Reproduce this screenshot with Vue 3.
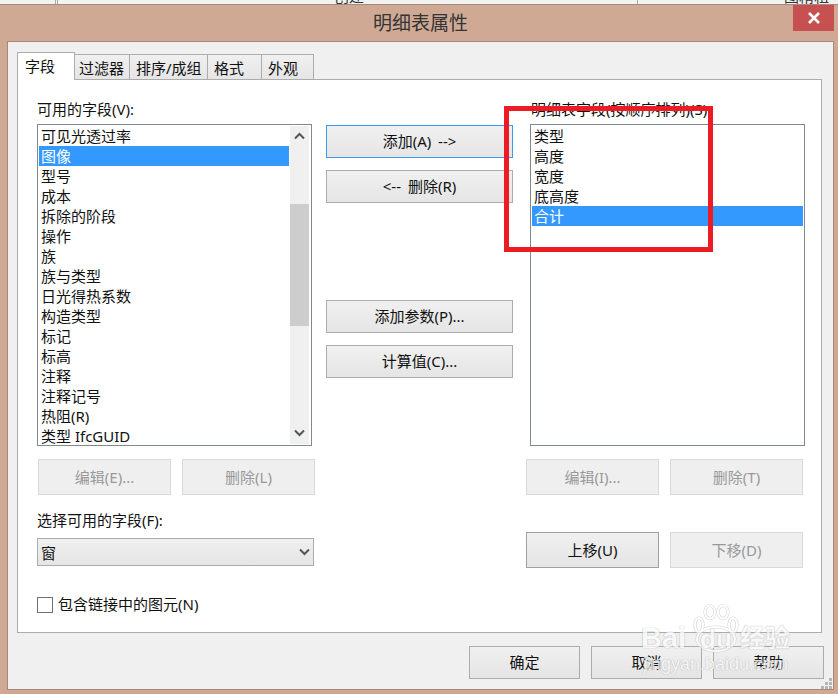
<script setup>
const leftItems = ['可见光透过率','图像','型号','成本','拆除的阶段','操作','族','族与类型','日光得热系数','构造类型','标记','标高','注释','注释记号','热阻(R)','类型 IfcGUID']
const rightItems = ['类型','高度','宽度','底高度','合计']
const tabs = ['字段','过滤器','排序/成组','格式','外观']
</script>

<template>
  <div class="page">
    <div class="strip">
      <span class="sl one"></span><span class="sl two"></span><span class="sl three"></span>
      <span class="st a">创建</span><span class="st b">图精粗</span>
    </div>
    <div class="window">
      <div class="titlebar">
        <span class="title">明细表属性</span>
        <div class="close">
          <svg width="12" height="12" viewBox="0 0 12 12"><path d="M1 1 L11 11 M11 1 L1 11" stroke="#fff" stroke-width="2.6" fill="none"/></svg>
        </div>
      </div>
      <div class="body">
        <div class="tabs">
          <div v-for="(t, i) in tabs" :key="t" class="tab" :class="['tab' + i, { active: i === 0 }]">{{ t }}</div>
        </div>
        <div class="panel">
          <div class="col left">
            <div class="label">可用的字段(V):</div>
            <div class="list">
              <div class="items">
                <div v-for="(it, i) in leftItems" :key="it" class="item" :class="{ sel: i === 1 }">{{ it }}</div>
              </div>
              <div class="scroll">
                <svg class="chev" width="11" height="8" viewBox="0 0 11 8"><path d="M1 6.5 L5.5 2 L10 6.5" stroke="#555" stroke-width="2" fill="none"/></svg>
                <div class="thumb"></div>
                <svg class="chev down" width="11" height="8" viewBox="0 0 11 8"><path d="M1 1.5 L5.5 6 L10 1.5" stroke="#555" stroke-width="2" fill="none"/></svg>
              </div>
            </div>
            <div class="btnrow one">
              <div class="btn off">编辑(E)...</div>
              <div class="btn off">删除(L)</div>
            </div>
            <div class="label sel-label">选择可用的字段(F):</div>
            <div class="select">
              <span>窗</span>
              <svg width="11" height="8" viewBox="0 0 11 8"><path d="M1 1.5 L5.5 6 L10 1.5" stroke="#555" stroke-width="2" fill="none"/></svg>
            </div>
            <div class="check"><span class="box"></span><span class="check-text">包含链接中的图元(N)</span></div>
          </div>
          <div class="col mid">
            <div class="btn focus">添加(A) --&gt;</div>
            <div class="btn">&lt;-- 删除(R)</div>
            <div class="btn spaced">添加参数(P)...</div>
            <div class="btn">计算值(C)...</div>
          </div>
          <div class="col right">
            <div class="label">明细表字段(按顺序排列)(S):</div>
            <div class="list rlist">
              <div class="items">
                <div v-for="(it, i) in rightItems" :key="it" class="item" :class="{ sel: i === 4 }">{{ it }}</div>
              </div>
            </div>
            <div class="btnrow two">
              <div class="btn off">编辑(I)...</div>
              <div class="btn off">删除(T)</div>
            </div>
            <div class="btnrow three">
              <div class="btn dark">上移(U)</div>
              <div class="btn off">下移(D)</div>
            </div>
          </div>
        </div>
        <div class="footer">
          <div class="btn">确定</div>
          <div class="btn">取消</div>
          <div class="btn">帮助</div>
        </div>
      </div>
    </div>

    <div class="redbox"></div>
    <div class="grip">
      <i></i><i></i><i></i><i></i><i></i><i></i>
    </div>
    <div class="watermark">
      <svg class="paw" width="48" height="52" viewBox="0 0 48 52">
        <g fill="none">
          <g stroke="#c9c9c9" stroke-width="3.2">
            <ellipse cx="7" cy="22" rx="4" ry="7"/>
            <ellipse cx="18" cy="9" rx="5" ry="6.5"/>
            <ellipse cx="31" cy="9" rx="5" ry="6.5"/>
            <ellipse cx="41" cy="22" rx="4" ry="7"/>
            <ellipse cx="24" cy="36" rx="19" ry="12"/>
          </g>
          <g stroke="#fff" stroke-width="2">
            <ellipse cx="7" cy="22" rx="4" ry="7"/>
            <ellipse cx="18" cy="9" rx="5" ry="6.5"/>
            <ellipse cx="31" cy="9" rx="5" ry="6.5"/>
            <ellipse cx="41" cy="22" rx="4" ry="7"/>
            <ellipse cx="24" cy="36" rx="19" ry="12"/>
          </g>
        </g>
      </svg>
      <span class="wm-bai">Bai</span><span class="wm-du">du</span><span class="wm-cn">经验</span>
      <span class="wm-url">jingyan.baidu.com</span>
    </div>
  </div>
</template>

<style>
html, body { margin: 0; padding: 0; }
</style>

<style scoped>
.page {
  position: relative;
  width: 838px;
  height: 694px;
  overflow: hidden;
  background: #cfa994;
  font-family: "Noto Sans", "Noto Sans CJK SC", sans-serif;
  font-size: 15px;
  color: #111;
}
.strip {
  position: relative;
  height: 4px;
  background: #f2f2f2;
  border-bottom: 1px solid #a58a7b;
  overflow: hidden;
  box-sizing: content-box;
}
.sl { position: absolute; top: 0; width: 1px; height: 4px; background: #aaa; }
.sl.one { left: 55px; }
.sl.two { left: 57px; }
.sl.three { left: 637px; }
.st { position: absolute; top: -13px; font-size: 15px; line-height: 18px; color: #333; }
.st.a { left: 334px; }
.st.b { left: 784px; }
.window {
  display: flex;
  flex-direction: column;
  height: 689px;
  padding: 0 4px 4px 7px;
  box-sizing: border-box;
}
.titlebar {
  position: relative;
  height: 36px;
  flex: none;
  display: flex;
  justify-content: center;
  align-items: center;
}
.title {
  font-size: 19px;
  line-height: 36px;
  color: #333;
}
.close {
  position: absolute;
  top: 0;
  right: 0;
  width: 41px;
  height: 26px;
  background: #c75050;
  display: flex;
  align-items: center;
  justify-content: center;
}
.body {
  flex: 1;
  background: #f0f0f0;
  border: 1px solid #a58a7b;
  box-sizing: border-box;
  padding: 10px 0 0 9px;
  display: flex;
  flex-direction: column;
}
.tabs {
  display: flex;
  align-items: flex-end;
  height: 28px;
  flex: none;
  position: relative;
  z-index: 1;
  margin-bottom: -1px;
}
.tab {
  height: 26px;
  box-sizing: border-box;
  border: 1px solid #acacac;
  border-left: none;
  background: linear-gradient(#f0f0f0, #e5e5e5);
  line-height: 27px;
  padding-left: 3px;
  white-space: nowrap;
}
.tab0 { width: 58px; }
.tab1 { width: 55px; padding-left: 4px; }
.tab2 { width: 78px; padding-left: 6px; }
.tab3 { width: 54px; padding-left: 6px; }
.tab4 { width: 52px; padding-left: 6px; }
.tab.active {
  height: 28px;
  background: #fff;
  border-left: 1px solid #acacac;
  border-bottom: none;
  line-height: 27px;
  padding-left: 7px;
}
.panel {
  width: 805px;
  height: 554px;
  flex: none;
  box-sizing: border-box;
  background: #fff;
  border: 1px solid #acacac;
  padding-left: 19px;
  display: flex;
}
.col { display: flex; flex-direction: column; }
.left { width: 278px; margin-right: 11px; }
.mid { width: 187px; margin-right: 13px; padding-top: 45px; gap: 12px; }
.right { width: 277px; }
.label { line-height: 18px; margin-top: 20px; height: 20px; white-space: nowrap; }
.right .label { padding-left: 5px; }
.list {
  margin-top: 4px;
  width: 275px;
  height: 322px;
  box-sizing: border-box;
  border: 1px solid #828790;
  padding: 1px;
  background: #fff;
  display: flex;
  overflow: hidden;
}
.rlist { margin-left: 4px; }
.items { flex: 1; min-width: 0; }
.item {
  height: 20px;
  line-height: 20px;
  padding-left: 2px;
  white-space: nowrap;
}
.item.sel { background: #3399ff; color: #fff; }
.scroll {
  width: 19px;
  margin: 0 1px;
  background: #f0f0f0;
  display: flex;
  flex-direction: column;
  align-items: center;
  height: 318px;
  flex: none;
}
.chev { margin-top: 6px; flex: none; }
.chev.down { margin-top: 103px; }
.thumb { width: 19px; height: 122px; margin-top: 64px; background: #cdcdcd; flex: none; }
.btn {
  height: 33px;
  box-sizing: border-box;
  border: 1px solid #acacac;
  padding-bottom: 2px;
  background: linear-gradient(#f0f0f0, #e5e5e5);
  display: flex;
  align-items: center;
  justify-content: center;
  white-space: pre;
  word-spacing: 3px;
  flex: none;
}
.btn.focus { border-color: #3c9af0; }
.btn.spaced { margin-top: 85px; }
.btn.off {
  background: #efefef;
  border-color: #d9d9d9;
  color: #999;
}
.btn.dark { border-color: #a0a0a0; }
.btnrow { display: flex; gap: 11px; flex: none; }
.btnrow .btn { width: 133px; height: 36px; }
.btnrow.one { margin-top: 13px; margin-left: 1px; }
.btnrow.two { margin-top: 13px; }
.btnrow.three { margin-top: 37px; }
.sel-label { margin-top: 16px; }
.select {
  margin-top: 7px;
  width: 277px;
  height: 28px;
  box-sizing: border-box;
  border: 1px solid #acacac;
  background: linear-gradient(#f0f0f0, #e5e5e5);
  display: flex;
  align-items: center;
  justify-content: space-between;
  padding: 0 3px 0 3px;
  flex: none;
}
.check {
  margin-top: 31px;
  display: flex;
  align-items: center;
  gap: 5px;
  line-height: 16px;
  height: 16px;
  white-space: nowrap;
}
.check-text { margin-top: -2px; }
.box {
  width: 16px;
  height: 16px;
  box-sizing: border-box;
  border: 1px solid #707070;
  background: #fff;
  flex: none;
}
.footer {
  display: flex;
  gap: 11px;
  margin-top: 13px;
  padding-left: 452px;
}
.footer .btn { width: 111px; height: 33px; }

.redbox {
  position: absolute;
  left: 504px;
  top: 106px;
  width: 209px;
  height: 146px;
  box-sizing: border-box;
  border: 5px solid #ed1c24;
}
.grip {
  position: absolute;
  left: 820px;
  top: 678px;
  width: 12px;
  height: 12px;
  display: grid;
  grid-template-columns: repeat(3, 3px);
  grid-auto-rows: 3px;
  gap: 1px;
  direction: rtl;
}
.grip i { background: #b5b5b5; display: block; }
.grip i:nth-child(1) { grid-area: 1 / 1; }
.grip i:nth-child(2) { grid-area: 2 / 1; }
.grip i:nth-child(3) { grid-area: 2 / 2; }
.grip i:nth-child(4) { grid-area: 3 / 1; }
.grip i:nth-child(5) { grid-area: 3 / 2; }
.grip i:nth-child(6) { grid-area: 3 / 3; }
.watermark {
  position: absolute;
  left: 640px;
  top: 600px;
  width: 180px;
  height: 90px;
  color: #fbfbfb;
  opacity: 0.75;
  pointer-events: none;
  text-shadow: 0 0 1px #aaa, 0 0 1px #aaa;
}
.paw { position: absolute; left: 52px; top: 3px; }
.wm-bai { position: absolute; left: 1px; top: 18px; font: bold 29px/40px "Liberation Sans", sans-serif; }
.wm-du { position: absolute; left: 60px; top: 19px; font: bold 26px/40px "Liberation Sans", sans-serif; }
.wm-cn { position: absolute; left: 100px; top: 20px; font-size: 25px; line-height: 34px; font-weight: 700; }
.wm-url { position: absolute; left: 3px; top: 52px; font: 18px/24px "Liberation Sans", sans-serif; white-space: nowrap; }
</style>
